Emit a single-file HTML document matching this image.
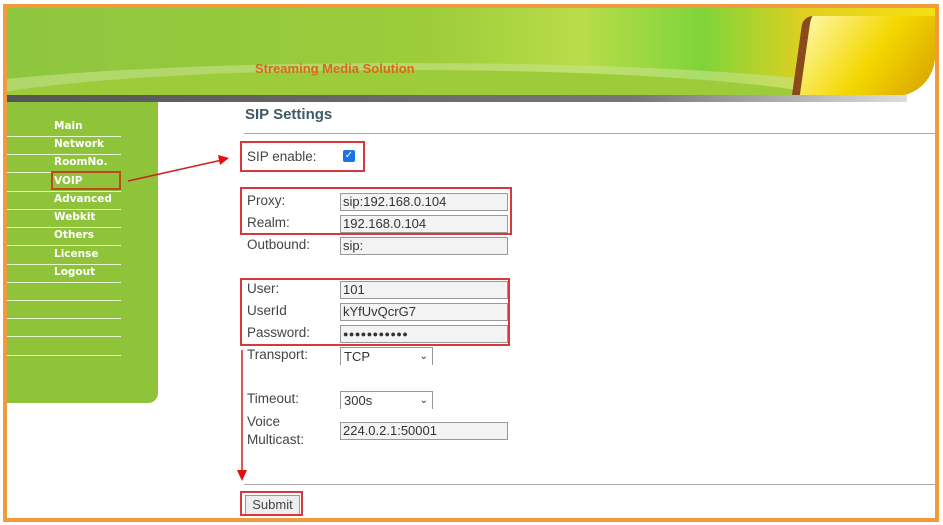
<!DOCTYPE html>
<html><head><meta charset="utf-8"><style>
*{margin:0;padding:0;box-sizing:border-box}
body{width:943px;height:525px;background:#fff;position:relative;overflow:hidden;font-family:"Liberation Sans",sans-serif}
.a{position:absolute}
.frame{left:3px;top:4px;width:936px;height:518px;border:4px solid #f39a3c}
.banner{left:7px;top:8px;width:928px;height:88px;background:linear-gradient(90deg,#8dc63f 0%,#9ccc3a 45%,#b9dc4a 62%,#7fd43a 75%,#e0d020 86%,#f3e010 100%);border-radius:0 0 40px 0;overflow:hidden}
.gray{left:7px;top:95px;width:900px;height:7px;background:linear-gradient(90deg,#555 0%,#777 70%,#ddd 100%)}
.side{left:7px;top:102px;width:151px;height:301px;background:#8fc43a;border-radius:0 0 10px 0}
.mi{position:absolute;left:47px;color:#fff;font-weight:bold;font-size:10.5px;font-family:"DejaVu Sans",sans-serif}
.ml{position:absolute;left:0;width:114px;height:1px;background:#e8f4d0}
.lab{position:absolute;left:247px;font-size:13.5px;color:#444}
.inp{position:absolute;left:340px;width:168px;height:18px;border:1px solid #999;background:#f3f3f3;font-size:13px;color:#333;padding-left:2px;line-height:16px}
.sel{position:absolute;left:340px;width:93px;height:18px;border:1px solid #999;border-bottom:none;font-size:13px;color:#333;padding-left:3px;line-height:17px}
.red{position:absolute;border:2px solid #d9363e}
</style></head><body>
<div class="a banner">
 <div class="a" style="left:-100px;top:55px;width:1000px;height:80px;border-radius:50%;background:#c6e28a;opacity:.6"></div>
 <div class="a" style="left:-50px;top:62px;width:900px;height:80px;border-radius:50%;background:#9ccc3a"></div>
 <div class="a" style="left:790px;top:8px;width:140px;height:85px;background:linear-gradient(120deg,#fff6a0,#f3d800 50%,#d8a000);border-left:8px solid #8a4a1a;transform:skewX(-8deg);border-radius:10px 0 0 0"></div>
 <div class="a" style="left:248px;top:53px;color:#d9691a;font-weight:bold;font-size:13px">Streaming Media Solution</div>
</div>
<div class="a gray"></div>
<div class="a side">
 <div class="mi" style="top:18px">Main</div><div class="ml" style="top:34px"></div>
 <div class="mi" style="top:36px">Network</div><div class="ml" style="top:52px"></div>
 <div class="mi" style="top:54px">RoomNo.</div><div class="ml" style="top:70px"></div>
 <div class="mi" style="top:73px">VOIP</div><div class="ml" style="top:89px"></div>
 <div class="mi" style="top:91px">Advanced</div><div class="ml" style="top:107px"></div>
 <div class="mi" style="top:109px">Webkit</div><div class="ml" style="top:125px"></div>
 <div class="mi" style="top:127px">Others</div><div class="ml" style="top:143px"></div>
 <div class="mi" style="top:146px">License</div><div class="ml" style="top:162px"></div>
 <div class="mi" style="top:164px">Logout</div><div class="ml" style="top:180px"></div>
 <div class="ml" style="top:198px"></div><div class="ml" style="top:216px"></div><div class="ml" style="top:234px"></div><div class="ml" style="top:253px"></div>
</div>
<div class="a" style="left:245px;top:106px;font-size:15px;font-weight:bold;color:#3d5a66">SIP Settings</div>
<div class="a" style="left:244px;top:133px;width:692px;height:1px;background:#aaa"></div>
<div class="lab" style="top:149px">SIP enable:</div>
<div class="a" style="left:343px;top:150px;width:12px;height:12px;background:#1a73e8;border-radius:2px;color:#fff;font-size:10px;line-height:12px;text-align:center">✓</div>
<div class="lab" style="top:193px">Proxy:</div><div class="inp" style="top:193px">sip:192.168.0.104</div>
<div class="lab" style="top:215px">Realm:</div><div class="inp" style="top:215px">192.168.0.104</div>
<div class="lab" style="top:237px">Outbound:</div><div class="inp" style="top:237px">sip:</div>
<div class="lab" style="top:281px">User:</div><div class="inp" style="top:281px">101</div>
<div class="lab" style="top:303px">UserId</div><div class="inp" style="top:303px">kYfUvQcrG7</div>
<div class="lab" style="top:325px">Password:</div><div class="inp" style="top:325px;font-size:9px;letter-spacing:0.5px">●●●●●●●●●●●</div>
<div class="lab" style="top:347px">Transport:</div><div class="sel" style="top:347px">TCP<span style="position:absolute;right:4px;font-size:10px">⌄</span></div>
<div class="lab" style="top:391px">Timeout:</div><div class="sel" style="top:391px">300s<span style="position:absolute;right:4px;font-size:10px">⌄</span></div>
<div class="lab" style="top:413px;line-height:18px">Voice<br>Multicast:</div><div class="inp" style="top:422px">224.0.2.1:50001</div>
<div class="a" style="left:244px;top:484px;width:692px;height:1px;background:#aaa"></div>
<div class="a" style="left:245px;top:495px;width:55px;height:20px;border:1px solid #999;background:#eee;font-size:13px;color:#444;text-align:center;line-height:18px">Submit</div>
<div class="red" style="left:240px;top:141px;width:125px;height:31px"></div>
<div class="red" style="left:240px;top:187px;width:272px;height:48px"></div>
<div class="red" style="left:240px;top:278px;width:270px;height:68px"></div>
<div class="red" style="left:51px;top:171px;width:70px;height:19px;border-color:#c04a20"></div>
<div class="red" style="left:240px;top:491px;width:63px;height:25px"></div>
<svg class="a" style="left:0;top:0" width="943" height="525">
 <line x1="128" y1="181" x2="222" y2="160" stroke="#d02020" stroke-width="1.5"/>
 <polygon points="229,158 218,155 220,165" fill="#e01010"/>
 <line x1="242" y1="350" x2="242" y2="472" stroke="#d02020" stroke-width="1.5"/>
 <polygon points="237,470 247,470 242,481" fill="#e01010"/>
</svg>
<div class="a frame"></div>
</body></html>
